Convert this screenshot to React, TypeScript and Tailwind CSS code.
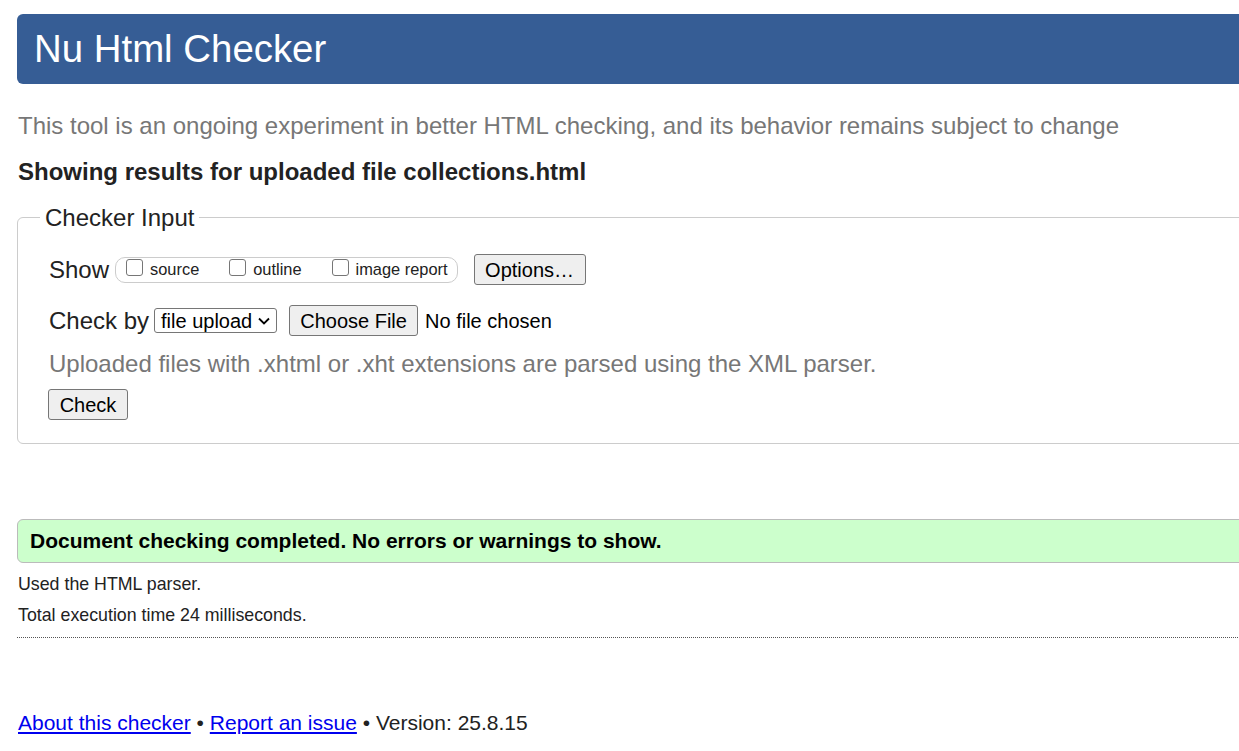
import React from 'react';

// Nu Html Checker results page (rendered at 150% zoom, so everything is scaled up)

function Box({ label }: { label: string }) {
  return (
    <label className="flex items-center gap-[7px]">
      <input
        type="checkbox"
        className="appearance-none size-[17px] mb-[4px] border border-[#767676] rounded-[3px] bg-white"
      />
      <span className="text-[16.4px] text-[#222]">{label}</span>
    </label>
  );
}

function NativeButton({ children, className = '' }: { children: React.ReactNode; className?: string }) {
  return (
    <button
      type="button"
      className={`h-[31px] border border-[#767676] rounded-[3px] bg-[#efefef] text-[20px] text-black leading-none ${className}`}
    >
      {children}
    </button>
  );
}

export default function App() {
  return (
    <div className="w-full h-screen overflow-hidden bg-white font-['Liberation_Sans',Arial,sans-serif] text-[#222]">
      <div className="w-[1320px] pl-[17px] pt-[14px]">
        {/* Header */}
        <header className="h-[70px] bg-[#365d95] rounded-[6px] flex items-center pl-[17px]">
          <h1 className="text-[38.4px] text-white leading-none">Nu Html Checker</h1>
        </header>

        <p className="mt-[27px] pl-[1px] text-[24px] leading-[30px] text-[#777]">
          This tool is an ongoing experiment in better HTML checking, and its behavior remains subject to change
        </p>

        <h2 className="mt-[16px] pl-[1px] text-[24px] leading-[30px] font-bold text-[#222]">
          Showing results for uploaded file collections.html
        </h2>

        {/* Checker input */}
        <fieldset className="mt-[18px] border border-[#ccc] rounded-[6px] pl-[31px] pt-[24px] pb-[23px]">
          <legend className="-ml-[9px] px-[5px] text-[24px] leading-[25px]">Checker Input</legend>

          <div className="h-[31px] flex items-center">
            <span className="text-[24px]">Show</span>
            <div className="ml-[6px] h-[26px] flex items-center gap-[30px] border border-[#ccc] rounded-[10px] pl-[10px] pr-[9px]">
              <Box label="source" />
              <Box label="outline" />
              <Box label="image report" />
            </div>
            <NativeButton className="ml-[16px] w-[112px]">Options…</NativeButton>
          </div>

          <div className="mt-[20px] h-[31px] flex items-center">
            <span className="text-[24px]">Check by</span>
            <div className="ml-[5px] h-[25px] w-[123px] flex items-center justify-between border border-[#767676] rounded-[3px] pl-[6px] pr-[6px]">
              <span className="text-[20px] text-black leading-none">file upload</span>
              <svg width="12" height="8" viewBox="0 0 12 8" fill="none" stroke="#000" strokeWidth="1.8">
                <path d="M1 1.5l5 5 5-5" />
              </svg>
            </div>
            <NativeButton className="ml-[12px] w-[129px]">Choose File</NativeButton>
            <span className="ml-[7px] text-[20px] text-black">No file chosen</span>
          </div>

          <p className="mt-[13px] text-[24px] leading-[30px] text-[#777]">
            Uploaded files with .xhtml or .xht extensions are parsed using the XML parser.
          </p>

          <NativeButton className="mt-[10px] -ml-[1px] w-[80px]">Check</NativeButton>
        </fieldset>

        {/* Result */}
        <div className="mt-[75px] h-[44px] flex items-center bg-[#ccffcc] border border-[#bbb] rounded-[6px] pl-[12px]">
          <p className="text-[21px] font-bold text-black">
            Document checking completed. No errors or warnings to show.
          </p>
        </div>

        <p className="mt-[8px] pl-[1px] text-[17.8px] leading-[26px] text-[#222]">Used the HTML parser.</p>
        <p className="mt-[5px] pl-[1px] text-[17.8px] leading-[26px] text-[#222]">Total execution time 24 milliseconds.</p>
        <div className="mt-[9px] border-t border-dotted border-[#555]" />

        {/* Footer */}
        <p className="mt-[72px] pl-[1px] text-[21px] leading-[26px] text-[#222]">
          <a href="#" className="text-[#0000ee] underline">About this checker</a>
          {' • '}
          <a href="#" className="text-[#0000ee] underline">Report an issue</a>
          {' • Version: 25.8.15'}
        </p>
      </div>
    </div>
  );
}
